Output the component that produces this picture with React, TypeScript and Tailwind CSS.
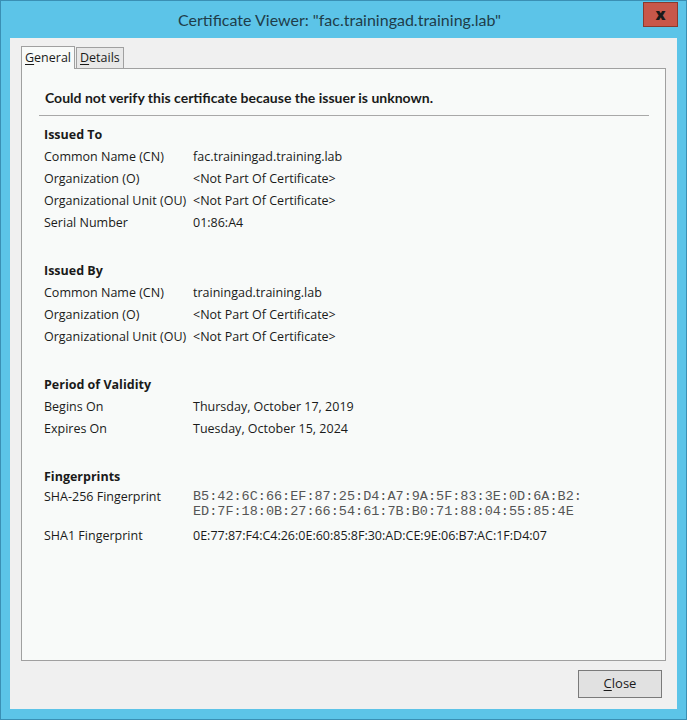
import { ReactNode } from 'react';

const FONT = { fontFamily: '"Open Sans", "Noto Sans", sans-serif' };
const TITLE_FONT = { fontFamily: 'Lato, "Open Sans", sans-serif' };

function Row({ label, children }: { label: string; children: ReactNode }) {
  return (
    <div className="flex h-[22px] items-center">
      <div className="w-[149px] shrink-0">{label}</div>
      <div>{children}</div>
    </div>
  );
}

function Section({ title, children }: { title: string; children: ReactNode }) {
  return (
    <div className="mb-[26px]">
      <div className="flex h-[22px] items-center font-bold">{title}</div>
      {children}
    </div>
  );
}

export default function App() {
  return (
    <div className="h-[725px] w-[690px] bg-white" style={FONT}>
      <div className="flex h-[720px] w-[687px] flex-col border border-[#3a8fb4] bg-[#5cc4e8]">
        {/* title bar */}
        <div className="relative flex h-[37px] shrink-0 items-center justify-center">
          <span className="pr-[8px] text-[16px] text-[#1f3d4a]" style={TITLE_FONT}>
            Certificate Viewer: "fac.trainingad.training.lab"
          </span>
          <div className="absolute right-[8px] top-[1px] flex h-[25px] w-[35px] items-center justify-center border border-[#8a3a2e] bg-[#c8574a] pb-[2px] text-[16px] font-extrabold text-[#1a1a1a]">
            x
          </div>
        </div>

        {/* client area */}
        <div className="mx-[9px] mb-[10px] flex flex-1 flex-col bg-[#f0f0f0] px-[11px] pt-[8px] text-[12.5px] text-[#1a1a1a]">
          <div className="flex items-end">
            <div className="relative z-10 -mb-px h-[23px] border border-b-0 border-[#a0a0a0] bg-[#f8faf9] px-[3px] pt-[2px]">
              <span className="underline decoration-1 underline-offset-2">G</span>eneral
            </div>
            <div className="ml-[1px] h-[21px] border border-b-0 border-[#a0a0a0] bg-[#e8e8e8] px-[3px] pt-[1px]">
              <span className="underline decoration-1 underline-offset-2">D</span>etails
            </div>
          </div>

          <div className="h-[593px] border border-[#a0a0a0] bg-[#f8faf9] px-[17px] pt-[18px]">
            <div className="px-[6px] text-[14px] font-bold" style={TITLE_FONT}>
              Could not verify this certificate because the issuer is unknown.
            </div>
            <div className="mt-[7px] h-px w-[610px] bg-[#a8a8a8]" />

            <div className="mt-[8px] px-[5px]">
              <Section title="Issued To">
                <Row label="Common Name (CN)">fac.trainingad.training.lab</Row>
                <Row label="Organization (O)">&lt;Not Part Of Certificate&gt;</Row>
                <Row label="Organizational Unit (OU)">&lt;Not Part Of Certificate&gt;</Row>
                <Row label="Serial Number">01:86:A4</Row>
              </Section>

              <Section title="Issued By">
                <Row label="Common Name (CN)">trainingad.training.lab</Row>
                <Row label="Organization (O)">&lt;Not Part Of Certificate&gt;</Row>
                <Row label="Organizational Unit (OU)">&lt;Not Part Of Certificate&gt;</Row>
              </Section>

              <Section title="Period of Validity">
                <Row label="Begins On">Thursday, October 17, 2019</Row>
                <Row label="Expires On">Tuesday, October 15, 2024</Row>
              </Section>

              <div>
                <div className="flex h-[22px] items-center font-bold">Fingerprints</div>
                <div className="flex pt-[1px]">
                  <div className="w-[149px] shrink-0 leading-[15px]">SHA-256 Fingerprint</div>
                  <div
                    className="text-[13.5px] leading-[15px] text-[#555]"
                    style={{ fontFamily: '"Liberation Mono", monospace' }}
                  >
                    B5:42:6C:66:EF:87:25:D4:A7:9A:5F:83:3E:0D:6A:B2:
                    <br />
                    ED:7F:18:0B:27:66:54:61:7B:B0:71:88:04:55:85:4E
                  </div>
                </div>
                <div className="mt-[6px]">
                  <Row label="SHA1 Fingerprint">0E:77:87:F4:C4:26:0E:60:85:8F:30:AD:CE:9E:06:B7:AC:1F:D4:07</Row>
                </div>
              </div>
            </div>
          </div>

          <div className="flex justify-end pt-[9px]">
            <div className="mr-[4px] flex h-[28px] w-[84px] items-center justify-center border border-[#7a7a7a] bg-[#e1e1e1] text-[13px]">
              <span className="underline decoration-1 underline-offset-2">C</span>lose
            </div>
          </div>
        </div>
      </div>
    </div>
  );
}
